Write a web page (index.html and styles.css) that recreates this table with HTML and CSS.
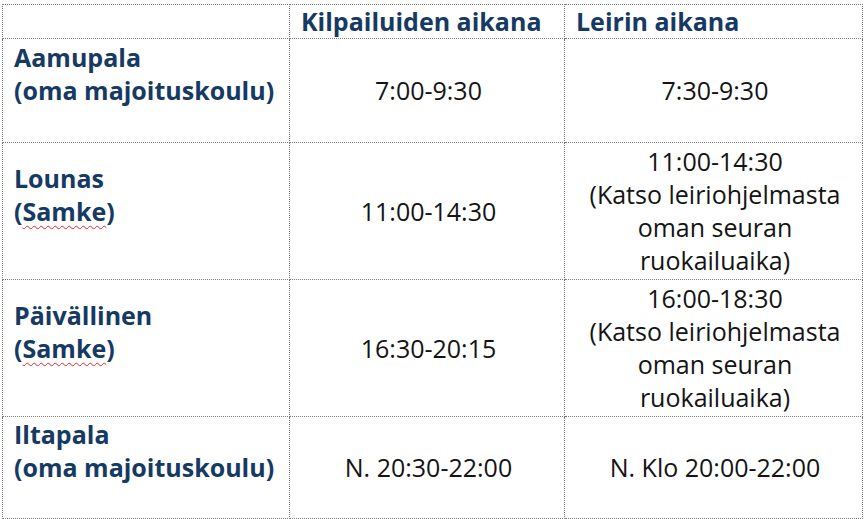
FILE: index.html
```html
<!DOCTYPE html>
<html lang="fi">
<head>
<meta charset="utf-8">
<title>Ruokailuajat</title>
<link rel="stylesheet" href="styles.css">
</head>
<body>
<table class="schedule">
  <colgroup>
    <col class="c1">
    <col class="c2">
    <col class="c3">
  </colgroup>
  <tr class="r-head">
    <th></th>
    <th>Kilpailuiden aikana</th>
    <th>Leirin aikana</th>
  </tr>
  <tr class="r-short">
    <td class="label">Aamupala<br>(oma majoituskoulu)</td>
    <td class="time">7:00-9:30</td>
    <td class="time">7:30-9:30</td>
  </tr>
  <tr class="r-tall">
    <td class="label">Lounas<br>(<span class="typo">Samke</span>)</td>
    <td class="time">11:00-14:30</td>
    <td class="time">11:00-14:30<br>(Katso leiriohjelmasta<br>oman seuran<br>ruokailuaika)</td>
  </tr>
  <tr class="r-tall">
    <td class="label">Päivällinen<br>(<span class="typo">Samke</span>)</td>
    <td class="time">16:30-20:15</td>
    <td class="time">16:00-18:30<br>(Katso leiriohjelmasta<br>oman seuran<br>ruokailuaika)</td>
  </tr>
  <tr class="r-last">
    <td class="label">Iltapala<br>(oma majoituskoulu)</td>
    <td class="time">N. 20:30-22:00</td>
    <td class="time">N. Klo 20:00-22:00</td>
  </tr>
</table>
</body>
</html>
```
FILE: styles.css
```css
html, body {
  margin: 0;
  padding: 0;
  background: #ffffff;
}

body {
  padding: 4px 0 0 2px;
  font-family: "Open Sans", "Noto Sans", sans-serif;
}

.schedule {
  border-collapse: collapse;
  table-layout: fixed;
  width: 860px;
  font-size: 25px;
  line-height: 33px;
  color: #141414;
}

.c1 { width: 287px; }
.c2 { width: 275px; }
.c3 { width: 298px; }

.schedule th,
.schedule td {
  border: 1px dotted #7a7a7a;
  padding: 0 8px 0 11px;
  vertical-align: middle;
}

.schedule th {
  text-align: left;
  font-weight: 700;
  color: #163a63;
  white-space: nowrap;
}

.label {
  font-weight: 700;
  color: #163a63;
  white-space: nowrap;
}

.label::after {
  content: "";
  display: block;
  height: 33px;
}

.time {
  text-align: center;
  white-space: nowrap;
}

.r-head { height: 33px; }
.r-short { height: 104px; }
.r-tall { height: 137px; }
.r-last { height: 102px; }

.typo {
  text-decoration: underline wavy #e0282a;
  text-decoration-thickness: 1px;
  text-underline-offset: 4px;
}
```
